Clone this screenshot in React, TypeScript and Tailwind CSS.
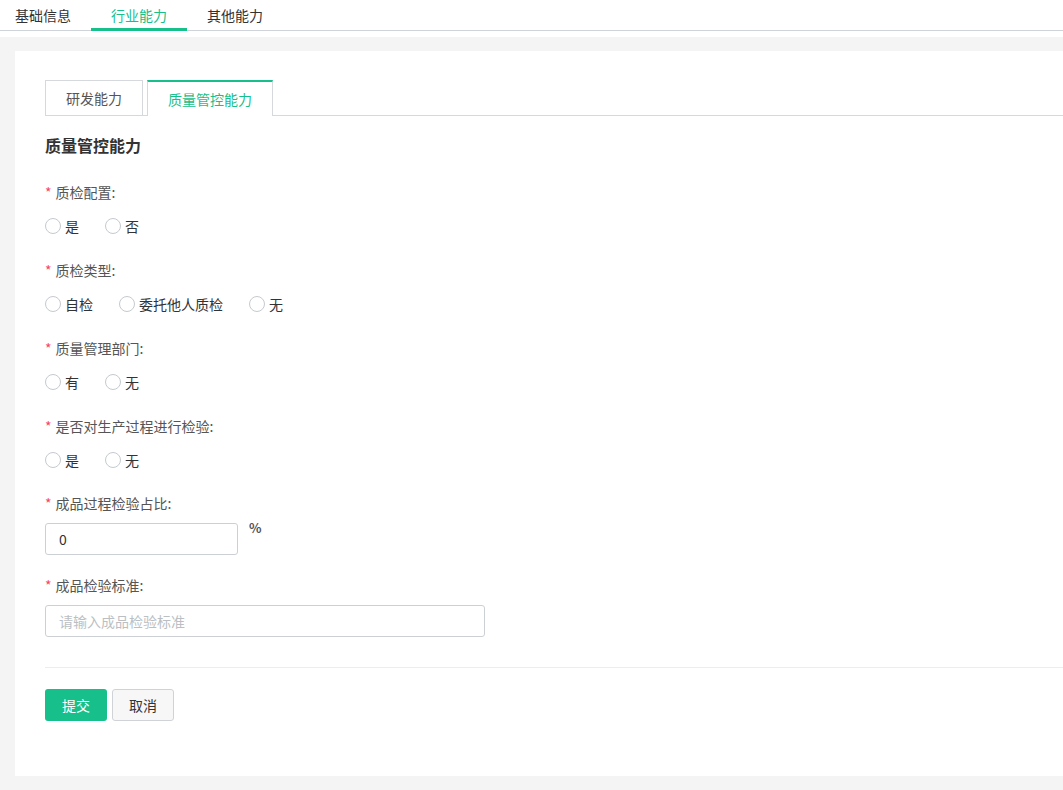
import React from "react";

const font = { fontFamily: '"Noto Sans CJK SC", "Noto Sans", sans-serif' };

function Label({ text }: { text: string }) {
  return (
    <div className="flex h-5 items-center text-[14px] leading-5 text-[#555]">
      <span className="mr-[4px] text-[#f5475b]">*</span>
      <span>{text}:</span>
    </div>
  );
}

function Radios({ options }: { options: string[] }) {
  return (
    <div className="mt-[14px] flex h-5 items-center text-[14px] text-[#333]">
      {options.map((o) => (
        <label key={o} className="mr-[26px] flex items-center">
          <span className="h-[16px] w-[16px] rounded-full border border-[#c5cad0] bg-white" />
          <span className="ml-[4px]">{o}</span>
        </label>
      ))}
    </div>
  );
}

export default function App() {
  const radioFields = [
    { label: "质检配置", options: ["是", "否"] },
    { label: "质检类型", options: ["自检", "委托他人质检", "无"] },
    { label: "质量管理部门", options: ["有", "无"] },
    { label: "是否对生产过程进行检验", options: ["是", "无"] },
  ];

  return (
    <div className="min-h-[790px] overflow-hidden bg-[#f4f4f4]" style={font}>
      <div className="bg-white pb-[6px]">
        <div className="flex h-[31px] border-b border-[#cfd4da] text-[14px]">
          <div className="flex items-center pl-[15px] pr-[20px] text-[#333]">基础信息</div>
          <div className="-mb-px flex items-center border-b-[3px] border-[#17c08a] px-[20px] pt-[2px] text-[#17c08a]">
            行业能力
          </div>
          <div className="flex items-center px-[20px] text-[#333]">其他能力</div>
        </div>
      </div>

      <div className="pl-[15px] pt-[14px] pb-[14px]">
        <div className="bg-white pl-[30px] pt-[30px] pb-[55px]">
          <div className="flex h-[35px] items-end gap-[4px] border-b border-[#d5d8dc] text-[14px]">
            <div className="flex h-[35px] w-[98px] items-center justify-center border border-b-0 border-[#d5d8dc] text-[#555]">
              研发能力
            </div>
            <div className="-mb-px flex h-[36px] w-[126px] items-center justify-center border-x border-t-2 border-[#d5d8dc] border-t-[#17c08a] bg-white text-[#17c08a]">
              质量管控能力
            </div>
          </div>

          <h2 className="mt-[19px] text-[16px] font-bold leading-5 text-[#333]">质量管控能力</h2>

          <div className="mt-[27px]">
            {radioFields.map((f) => (
              <div key={f.label} className="mb-[24px]">
                <Label text={f.label} />
                <Radios options={f.options} />
              </div>
            ))}
          </div>

          <div className="-mt-[1px]">
            <Label text="成品过程检验占比" />
            <div className="mt-[10px] flex items-start">
              <div className="flex h-[32px] w-[193px] items-center rounded-[3px] border border-[#ccd0d5] pl-[13px] text-[14px] text-[#333]">
                0
              </div>
              <span className="ml-[11px] mt-[-5px] text-[13px] font-bold text-[#555]">%</span>
            </div>
          </div>

          <div className="mt-[20px]">
            <Label text="成品检验标准" />
            <div className="mt-[10px] flex h-[32px] w-[440px] items-center rounded-[3px] border border-[#ccd0d5] pl-[13px] text-[14px] text-[#bbbfc4]">
              请输入成品检验标准
            </div>
          </div>

          <div className="mt-[30px] h-px bg-[#ededed]" />

          <div className="mt-[21px] flex gap-[5px] text-[14px]">
            <button className="h-[32px] w-[62px] rounded-[3px] bg-[#17c08a] text-white">提交</button>
            <button className="h-[32px] w-[62px] rounded-[3px] border border-[#cfd3d8] bg-[#f7f7f7] text-[#333]">
              取消
            </button>
          </div>
        </div>
      </div>
    </div>
  );
}
